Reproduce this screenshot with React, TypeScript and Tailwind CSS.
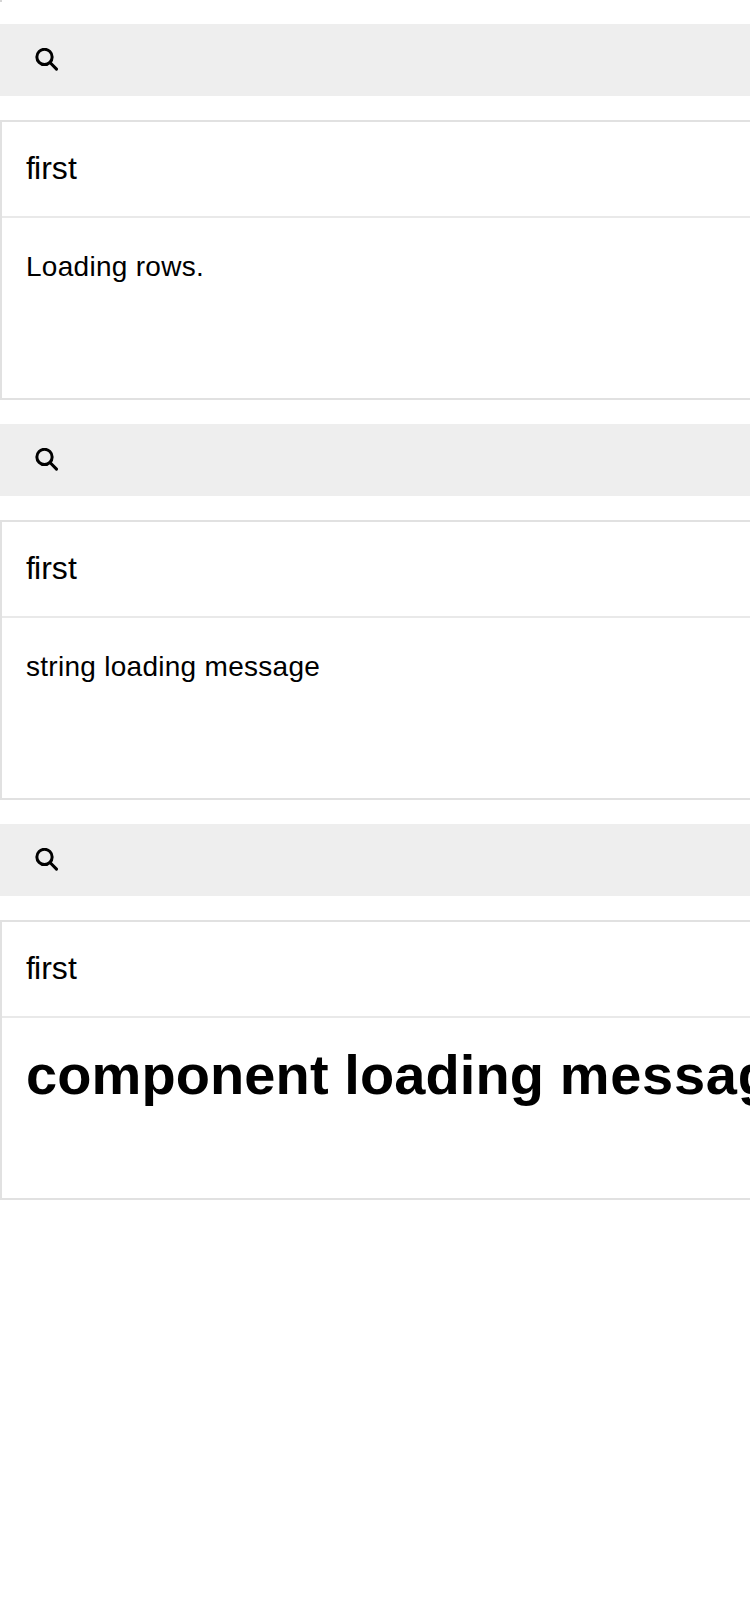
import type { ReactNode } from 'react';

function SearchIcon() {
  return (
    <svg className="h-6 w-6" viewBox="0 0 24 24" fill="none" stroke="#000" strokeWidth="3" strokeLinecap="round">
      <circle cx="10.5" cy="8.95" r="7.65" />
      <path d="M16 14.5 22.5 21.1" />
    </svg>
  );
}

function DataTable({ children }: { children: ReactNode }) {
  return (
    <section className="flex flex-col gap-6">
      <div className="flex h-[72px] items-center bg-[#eeeeee] pl-[34px]">
        <SearchIcon />
      </div>
      <div className="flex h-[280px] flex-col border-2 border-r-0 border-[#e1e1e1]">
        <div className="flex h-24 shrink-0 items-center border-b-2 border-[#e9e9e9] pb-0.5 pl-6 text-[32px] leading-[36px]">
          <span className="tracking-[0.05px] first-letter:tracking-[-0.9px]">
            <span className="tracking-[-0.9px]">f</span>irst
          </span>
        </div>
        <div className="pt-[29px] pl-6 text-[28px] leading-[40px] tracking-[0.28px] whitespace-nowrap">{children}</div>
      </div>
    </section>
  );
}

export default function App() {
  return (
    <main className="flex h-[1600px] w-[750px] flex-col overflow-hidden bg-white font-['Liberation_Sans',Arial,sans-serif] text-black">
      <div className="h-0.5 w-0.5 shrink-0 bg-[#d5d5d5]" />
      <div className="flex flex-col gap-6 pt-[22px]">
        <DataTable>Loading rows.</DataTable>
        <DataTable>string loading message</DataTable>
        <DataTable>
          <h1 className="text-[56px] leading-[56px] font-bold tracking-[0.1px]">
            component loading <span className="tracking-[0.7px]">message</span>
          </h1>
        </DataTable>
      </div>
    </main>
  );
}
